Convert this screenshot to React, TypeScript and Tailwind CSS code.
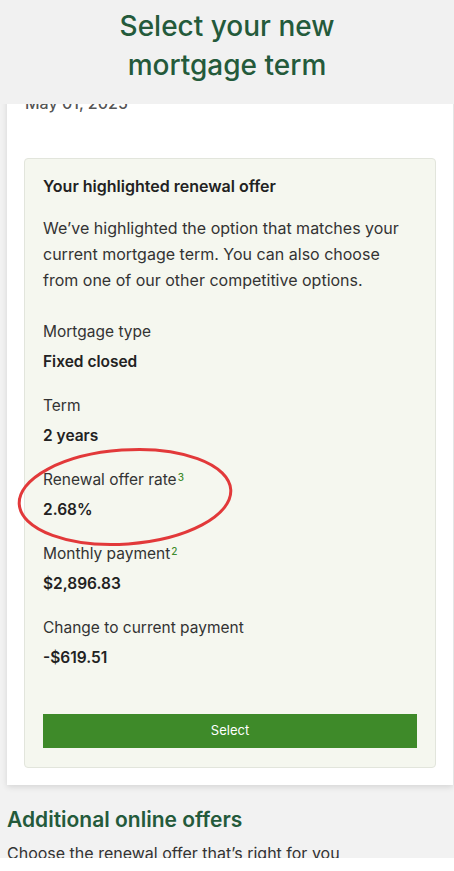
import React from "react";

const fields = [
  { label: "Mortgage type", value: "Fixed closed" },
  { label: "Term", value: "2 years" },
  { label: "Renewal offer rate", sup: "3", value: "2.68%" },
  { label: "Monthly payment", sup: "2", value: "$2,896.83" },
  { label: "Change to current payment", value: "-$619.51" },
];

const App: React.FC = () => {
  return (
    <div
      className="relative w-[454px] h-[871px] overflow-hidden bg-[#f2f2f2] text-[#2b2b2b]"
      style={{ fontFamily: "Inter, 'Liberation Sans', sans-serif" }}
    >
      {/* sticky page title */}
      <header className="absolute top-0 inset-x-0 z-10 h-[104px] bg-[#f1f1f1] flex justify-center">
        <h1 className="pt-[7px] text-center text-[28px] leading-[39px] font-medium text-[#245a3b]">
          Select your new
          <br />
          mortgage term
        </h1>
      </header>

      {/* offer card */}
      <section className="mt-[60px] ml-[7px] mr-[1px] bg-white shadow-[0_2px_6px_rgba(0,0,0,0.12)] px-[17px] pt-[31px] pb-[17px]">
        <p className="text-[16px] leading-[24px] font-medium text-[#555] pl-[1px]">May 01, 2025</p>

        <div className="mt-[43px] bg-[#f5f7ef] border border-[#e2e5dc] rounded-[4px] px-[18px] pt-[15px] pb-[19px]">
          <h2 className="text-[16px] leading-[24px] font-semibold text-[#222]">
            Your highlighted renewal offer
          </h2>
          <p className="mt-[17px] text-[16px] leading-[26px] text-[#333]">
            We’ve highlighted the option that matches your current mortgage
            term. You can also choose from one of our other competitive options.
          </p>

          <dl className="mt-[27px] flex flex-col gap-[20px]">
            {fields.map((f) => (
              <div key={f.label}>
                <dt className="text-[15.5px] leading-[24px] text-[#333]">
                  {f.label}
                  {f.sup && (
                    <sup className="text-[10px] text-[#3d8b2c] font-medium ml-[1px] top-[-0.4em]">{f.sup}</sup>
                  )}
                </dt>
                <dd className="mt-[6px] text-[15.5px] leading-[24px] font-semibold text-[#222]">
                  {f.value}
                </dd>
              </div>
            ))}
          </dl>

          <button className="mt-[44px] w-full h-[34px] bg-[#3e8a29] text-white text-[13px]">
            Select
          </button>
        </div>
      </section>

      {/* more offers */}
      <section className="mt-[20px] px-[7px]">
        <h2 className="text-[21px] leading-[30px] font-semibold text-[#245a3b]">
          Additional online offers
        </h2>
        <p className="mt-[6px] text-[16px] leading-[24px] text-[#333]">
          Choose the renewal offer that’s right for you
        </p>
      </section>

      {/* annotation circle */}
      <svg
        className="absolute left-[15px] top-[445px] pointer-events-none"
        width="220"
        height="104"
        viewBox="0 0 220 104"
      >
        <ellipse
          cx="110"
          cy="52"
          rx="106"
          ry="47"
          transform="rotate(-4 110 52)"
          fill="none"
          stroke="#e2393a"
          strokeWidth="3"
        />
      </svg>

      {/* bottom bar */}
      <div className="absolute bottom-0 inset-x-0 h-[13px] bg-white" />
    </div>
  );
};

export default App;
